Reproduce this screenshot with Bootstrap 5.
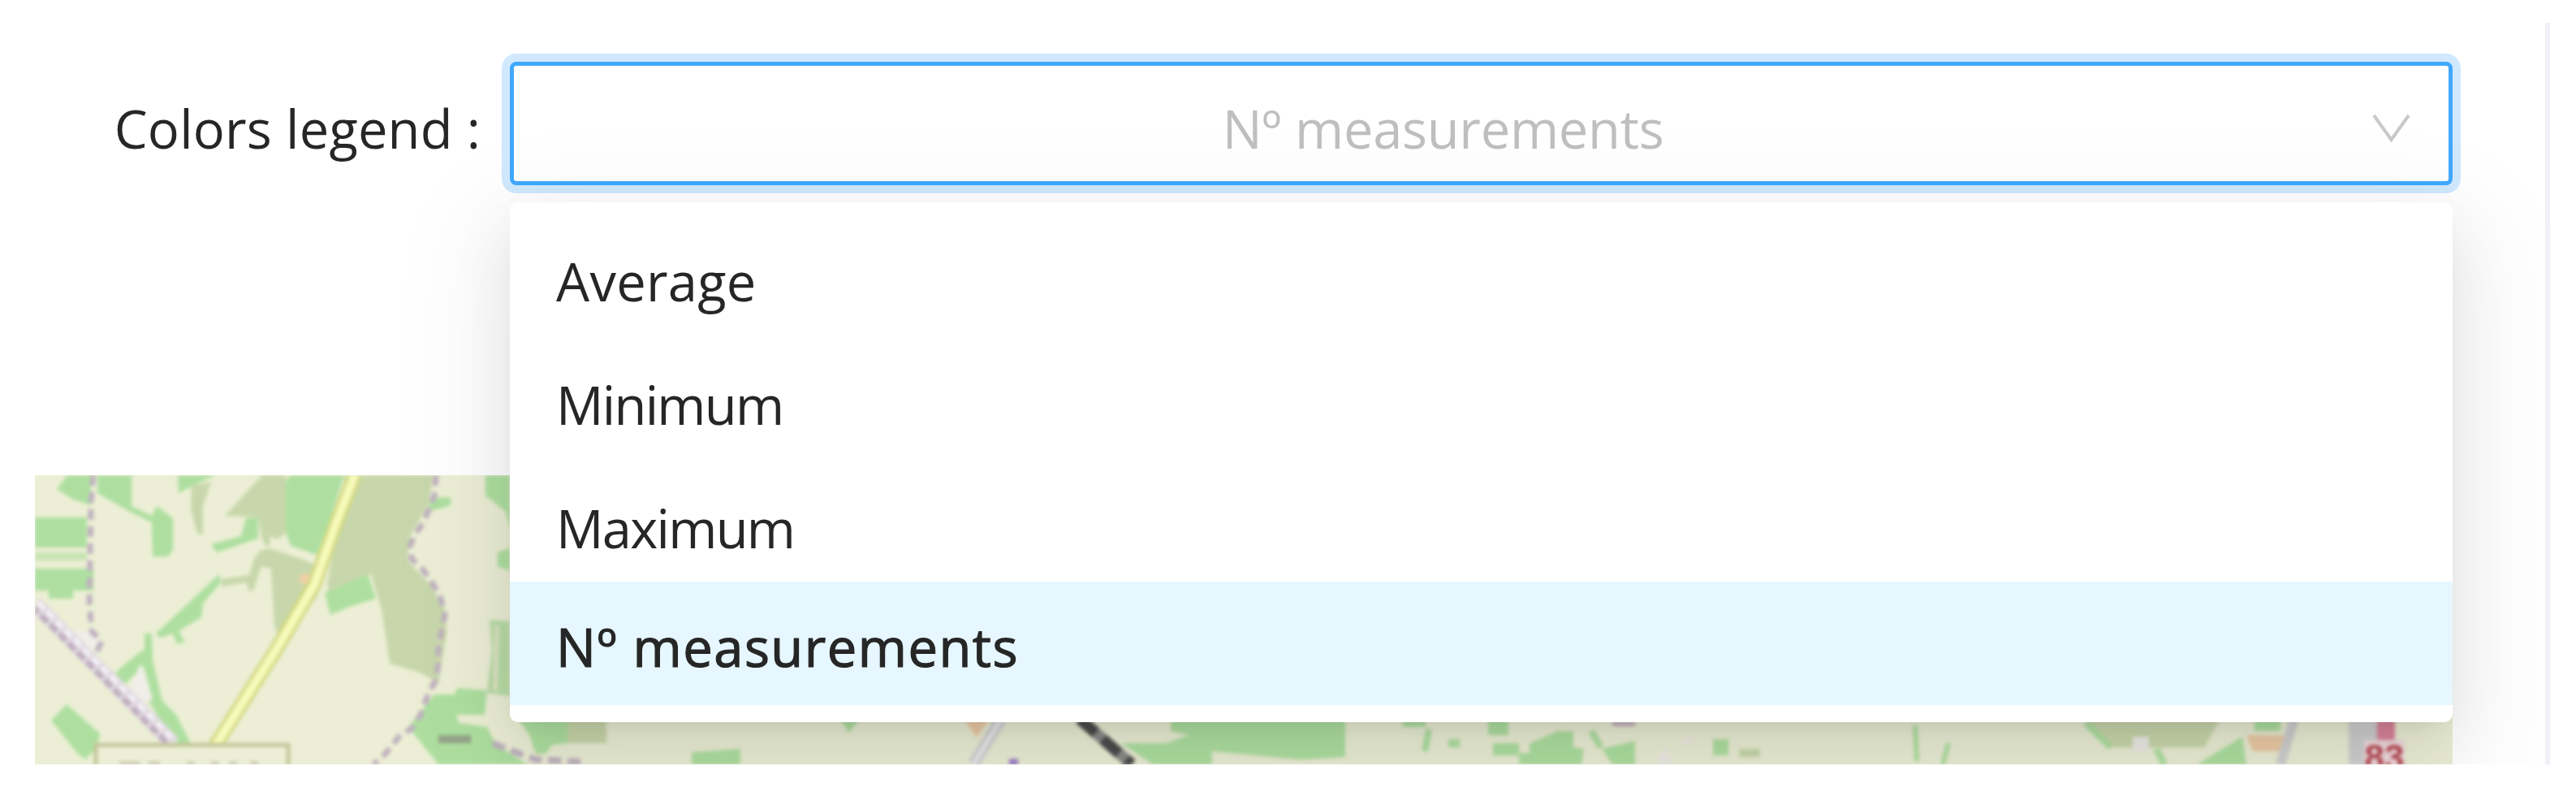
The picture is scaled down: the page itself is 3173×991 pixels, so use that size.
<!DOCTYPE html>
<html lang="en">
<head>
  <meta charset="UTF-8">
  <meta name="viewport" content="width=device-width, initial-scale=1">
  <title>Colors legend</title>
  <link href="https://cdn.jsdelivr.net/npm/bootstrap@5.3.2/dist/css/bootstrap.min.css" rel="stylesheet">
  <style>
    body {
      background: #fff;
      font-family: "Open Sans", "Noto Sans", sans-serif;
      color: #262626;
      overflow: hidden;
    }
    .page-wrap {
      padding-top: 28px;
    }
    .view-pane {
      width: 3135px;
      height: 913px;
      padding: 48px 114px 0 43px;
      overflow: hidden;
      position: relative;
    }
    .scroll-strip {
      width: 6px;
      height: 913px;
      background: #f0f0f6;
    }
    .legend-label {
      width: 585px;
      font-size: 65px;
      letter-spacing: .2px;
      line-height: 1;
      padding: 12px 36px 0 0;
      text-align: right;
      white-space: nowrap;
      filter: blur(.7px);
    }
    .legend-select {
      height: 152px;
      background: #fff;
      border: 5px solid #40a9ff;
      border-radius: 8px;
      box-shadow: 0 0 0 10px rgba(24, 144, 255, .2);
    }
    .legend-value {
      font-size: 65px;
      letter-spacing: -.25px;
      line-height: 1;
      color: #bfbfbf;
      padding: 12px 0 0 0;
      filter: blur(.7px);
    }
    .legend-arrow {
      width: 47px;
      height: 36px;
      margin-top: 10px;
      margin-right: 47px;
    }
    .map-box {
      height: 357px;
      margin-top: 357px;
      background: #ecefd5;
      overflow: hidden;
    }
    .map-box svg {
      display: block;
      filter: blur(2px);
    }
    .legend-menu {
      position: absolute;
      display: block;
      left: 628px;
      top: 221px;
      width: 2393px;
      height: 640px;
      margin: 0;
      padding: 11px 0 21px;
      background: #fff;
      border: 0;
      border-radius: 10px;
      box-shadow: 0 14px 28px -19px rgba(0, 0, 0, .12), 0 28px 76px 0 rgba(0, 0, 0, .08), 0 43px 133px 38px rgba(0, 0, 0, .05);
    }
    .legend-option {
      height: 152px;
      padding: 20px 57px 0;
      font-size: 65px;
      letter-spacing: .3px;
      line-height: 1;
      color: #262626;
    }
    .legend-option span {
      filter: blur(.7px);
    }
    .legend-option.option-tight {
      letter-spacing: -1.7px;
    }
    .legend-option.active,
    .legend-option:active {
      background: #e6f7ff;
      color: #262626;
      font-weight: 400;
      -webkit-text-stroke: 1.2px #262626;
      letter-spacing: 1.5px;
      padding-top: 8px;
    }
  </style>
</head>
<body>

<div class="page-wrap d-flex">
  <div class="view-pane">
    <div class="d-flex align-items-center">
      <label class="legend-label">Colors legend :</label>
      <div class="legend-select flex-grow-1 d-flex align-items-center">
        <div class="legend-value flex-grow-1 text-center">Nº measurements</div>
        <svg class="legend-arrow" viewBox="0 0 47 36" fill="none" stroke="#c9c9c9" stroke-width="4">
          <path d="M2 3 L23.5 33 L45 3"/>
        </svg>
      </div>
    </div>

    <div class="map-box">
      <svg width="2978" height="357" viewBox="43 585 2978 357">
        <!-- left part of the map -->
        <g fill="#aedfa0">
          <polygon points="70,602 83,585 112,585 112,622 90,615"/>
          <polygon points="120,585 162,585 162,623 187,635 193,623 213,638 213,677 207,685 188,685 187,643 160,630 120,607"/>
          <rect x="43" y="637" width="64" height="37"/>
          <rect x="43" y="700" width="72" height="27"/>
          <rect x="60" y="727" width="30" height="10"/>
          <polygon points="219,585 265,585 240,597 220,607"/>
          <polygon points="350,595 358,585 424,585 404,647 390,683 358,672 352,655"/>
          <polygon points="260,670 297,660 303,638 318,637 318,663 267,680"/>
          <polygon points="192,780 270,707 272,717 250,743 248,760 220,777 228,790 218,793 213,780 197,785"/>
          <polygon points="178,780 187,780 188,813 200,863 217,880 235,915 215,915 183,863 187,857 177,820 153,843 142,828 172,803 178,800"/>
          <polygon points="63,887 82,867 123,903 120,920 105,935 95,927"/>
          <polygon points="598,585 628,585 628,652 623,630 598,610"/>
          <polygon points="613,680 628,675 628,703 613,697"/>
          <polygon points="530,613 555,612 555,622 527,630"/>
          <polygon points="503,895 535,855 560,855 563,847 600,850 597,880 562,880 565,890 600,895 610,915 640,935 650,941 540,941"/>
        </g>
        <rect x="43" y="680" width="64" height="10" fill="#c8e4b2"/>
        <g fill="#c8d7ab">
          <polygon points="277,635 323,585 352,585 352,657 327,673 322,660 318,637"/>
          <polygon points="273,713 307,708 313,688 320,678 332,675 400,697 390,735 345,790 338,770 334,700 322,697 312,727 306,727 304,717 273,722"/>
          <polygon points="425,585 533,585 528,620 505,660 502,690 530,720 548,750 550,780 540,840 515,827 480,817 470,750 457,707 405,728 403,720"/>
          <polygon points="236,598 260,593 250,623 250,658 243,657 235,627"/>
        </g>
        <polygon points="400,730 453,707 463,737 430,747 407,757" fill="#aedfa0"/>
        <polygon points="333,660 390,687 390,697 332,667" fill="#ecefd5"/>
        <polygon points="369,707 392,707 388,718 369,718" fill="#f0cfa6"/>
        <polygon points="173,817 188,862 173,865 160,847" fill="#f0eee8"/>
        <polygon points="90,777 120,777 123,793 107,803" fill="#f0eee8"/>
        <g fill="#b9dca6">
          <polygon points="603,763 628,765 628,857 600,853 606,800"/>
        </g>
        <polyline points="612,770 610,850" stroke="#e2e6c8" stroke-width="5" fill="none"/>
        <polyline points="43,743 213,915" stroke="#e2dbe2" stroke-width="19" fill="none"/>
        <polyline points="39,746 209,918" stroke="#bfaec0" stroke-width="7" stroke-dasharray="12 4" fill="none"/>
        <polyline points="47,742 217,914" stroke="#f6f4f8" stroke-width="5" stroke-dasharray="10 6" fill="none"/>
        <polyline points="437,585 413,647 387,720 340,800 267,915 252,941" stroke="#d3d985" stroke-width="18" fill="none"/>
        <polyline points="437,585 413,647 387,720 340,800 267,915 252,941" stroke="#f7fab9" stroke-width="10" fill="none"/>
        <polyline points="115,585 112,620 110,740 113,777 125,790 118,805" stroke="#c0b2bf" stroke-width="7" stroke-dasharray="13 8" fill="none"/>
        <polyline points="537,585 535,610 528,628 520,645 510,660 505,673 507,688 520,700 532,717 542,733 548,757 543,780 540,797 540,817 537,837 528,853 518,880 507,897 493,905 473,930 460,941" stroke="#c0b2bf" stroke-width="7" stroke-dasharray="13 8" fill="none"/>
        <rect x="540" y="905" width="40" height="10" fill="#95a58a"/>
        <polyline points="607,915 640,928 660,935 720,938" stroke="#c0b2bf" stroke-width="8" stroke-dasharray="16 8" fill="none"/>
        <!-- map label box, bottom left -->
        <rect x="118" y="917" width="237" height="30" fill="#ecefd5" stroke="#c3c59a" stroke-width="5"/>
        <g fill="#d0cfb4">
          <rect x="147" y="937" width="26" height="5"/>
          <rect x="183" y="937" width="14" height="5"/>
          <rect x="230" y="937" width="10" height="5"/>
          <rect x="260" y="937" width="10" height="5"/>
          <rect x="282" y="937" width="10" height="5"/>
          <rect x="308" y="937" width="10" height="5"/>
        </g>
        <!-- strip below the open menu -->
        <g fill="#aedfa0">
          <polygon points="638,885 700,885 700,915 680,917 672,928 660,928 652,905"/>
          <polygon points="852,926 912,922 912,941 852,941"/>
          <polygon points="1034,885 1059,885 1046,902"/>
          <polygon points="1442,885 1657,885 1657,932 1600,935 1493,925 1493,941 1420,941 1381,915 1436,915 1464,905 1442,900"/>
          <rect x="1728" y="885" width="28" height="10"/>
          <rect x="1784" y="910" width="14" height="10"/>
          <rect x="1833" y="885" width="25" height="20"/>
          <rect x="1839" y="915" width="32" height="15"/>
          <polygon points="1884,915 1919,900 1938,900 1938,920 1951,922 1948,941 1871,941 1871,927 1884,927"/>
          <polygon points="1973,922 2014,912 2014,941 1986,941"/>
          <rect x="2110" y="910" width="19" height="20"/>
          <polygon points="2706,941 2762,907 2767,941"/>
          <rect x="2777" y="885" width="32" height="15"/>
        </g>
        <polygon points="699,885 747,885 747,915 699,915" fill="#c8d7ab"/>
        <polygon points="2568,885 2735,885 2715,920 2597,920" fill="#c8d7ab"/>
        <rect x="2142" y="922" width="26" height="10" fill="#c8d7ab"/>
        <g stroke="#aedfa0" fill="none">
          <polyline points="1760,898 1755,925" stroke-width="8"/>
          <polyline points="1960,900 1972,920" stroke-width="8"/>
          <polyline points="2359,893 2361,937" stroke-width="6"/>
          <polyline points="2400,915 2393,941" stroke-width="6"/>
          <polyline points="2569,890 2600,920" stroke-width="8"/>
          <polyline points="2656,922 2666,941" stroke-width="8"/>
        </g>
        <g fill="#eceae4">
          <polygon points="2040,941 2050,920 2062,941"/>
          <polygon points="2069,915 2081,905 2088,917"/>
          <rect x="2627" y="907" width="20" height="18"/>
        </g>
        <rect x="1986" y="888" width="28" height="6" fill="#c4b0bb"/>
        <polygon points="1187,885 1219,885 1203,908" fill="#eccba6"/>
        <polygon points="2767,905 2814,905 2809,925 2775,925" fill="#eccba6"/>
        <polyline points="1233,885 1199,941" stroke="#cfcfd2" stroke-width="14" fill="none"/>
        <polyline points="1233,885 1199,941" stroke="#ededed" stroke-width="5" fill="none"/>
        <rect x="1243" y="934" width="11" height="8" fill="#a183c9"/>
        <polyline points="1330,885 1394,941" stroke="#8a8a8a" stroke-width="14" fill="none"/>
        <polyline points="1330,885 1394,941" stroke="#4c4c4c" stroke-width="14" stroke-dasharray="26 12" fill="none"/>
        <polyline points="2826,885 2809,941" stroke="#cfcfcf" stroke-width="12" fill="none"/>
        <rect x="2893" y="885" width="35" height="60" fill="#cfcfcf"/>
        <rect x="2928" y="885" width="22" height="30" fill="#d9839a"/>
        <rect x="2912" y="911" width="50" height="34" fill="#eed9dc"/>
        <text x="2937" y="948" text-anchor="middle" font-family="Liberation Sans, sans-serif" font-weight="700" font-size="44" fill="#b94a55">83</text>
      </svg>
    </div>

    <div class="legend-menu dropdown-menu show">
      <a class="legend-option dropdown-item d-flex align-items-center"><span>Average</span></a>
      <a class="legend-option option-tight dropdown-item d-flex align-items-center"><span>Minimum</span></a>
      <a class="legend-option option-tight dropdown-item d-flex align-items-center"><span>Maximum</span></a>
      <a class="legend-option dropdown-item d-flex align-items-center active"><span>Nº measurements</span></a>
    </div>
  </div>
  <div class="scroll-strip"></div>
</div>

<script src="https://cdn.jsdelivr.net/npm/bootstrap@5.3.2/dist/js/bootstrap.bundle.min.js"></script>
</body>
</html>
